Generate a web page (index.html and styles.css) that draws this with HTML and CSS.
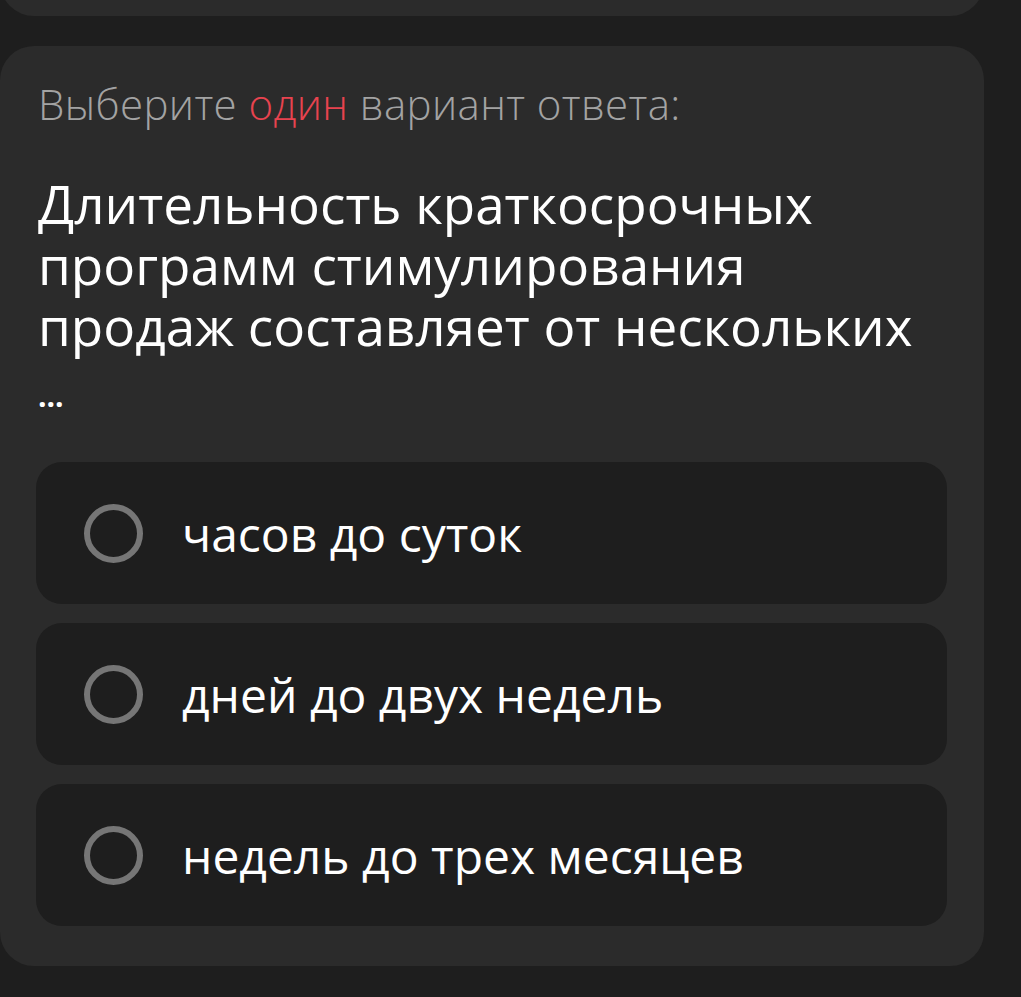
FILE: index.html
```html
<!DOCTYPE html>
<html lang="ru">
<head>
    <meta charset="UTF-8">
    <meta name="viewport" content="width=device-width, initial-scale=1.0">
    <title>Тест</title>
    <link rel="stylesheet" href="styles.css">
</head>
<body>
<div class="card card-prev"></div>
<div class="card">
    <div class="hint">Выберите <span class="accent">один</span> вариант ответа:</div>
    <div class="question">Длительность краткосрочных программ стимулирования продаж составляет от нескольких<br><span class="dots">...</span></div>
    <div class="options">
        <label class="option">
            <input type="radio" name="answer">
            <span class="radio"></span>
            <span class="option-text">часов до суток</span>
        </label>
        <label class="option">
            <input type="radio" name="answer">
            <span class="radio"></span>
            <span class="option-text">дней до двух недель</span>
        </label>
        <label class="option">
            <input type="radio" name="answer">
            <span class="radio"></span>
            <span class="option-text">недель до трех месяцев</span>
        </label>
    </div>
</div>
</body>
</html>
```

FILE: styles.css
```css
body {
    font-family: "Open Sans", Lato, sans-serif;
    margin: 0;
    padding: 0;
    background-color: #1e1e1e;
    color: #fff;
}
.card {
    width: 984px;
    box-sizing: border-box;
    background-color: #2b2b2b;
    border-radius: 34px;
    padding: 32px 37px 40px 36px;
}
.card-prev {
    height: 200px;
    margin-top: -184px;
    margin-bottom: 30px;
}
.hint {
    font-size: 42px;
    font-weight: 300;
    letter-spacing: 0.4px;
    color: #a3a3a3;
    line-height: 52px;
    padding-left: 2px;
}
.accent {
    color: #e8434f;
}
.question {
    font-size: 53px;
    line-height: 61px;
    margin-top: 43px;
    padding-left: 2px;
}
.dots {
    font-size: 30px;
    font-weight: 700;
}
.options {
    display: flex;
    flex-direction: column;
    gap: 19px;
    margin-top: 36px;
}
.option {
    display: flex;
    align-items: center;
    height: 142px;
    box-sizing: border-box;
    padding-left: 48px;
    background-color: #1e1e1e;
    border-radius: 26px;
    cursor: pointer;
}
.option input {
    display: none;
}
.radio {
    width: 59px;
    height: 59px;
    box-sizing: border-box;
    border: 6px solid #767676;
    border-radius: 50%;
    flex-shrink: 0;
}
.option-text {
    font-size: 48px;
    margin-left: 39px;
}
```
